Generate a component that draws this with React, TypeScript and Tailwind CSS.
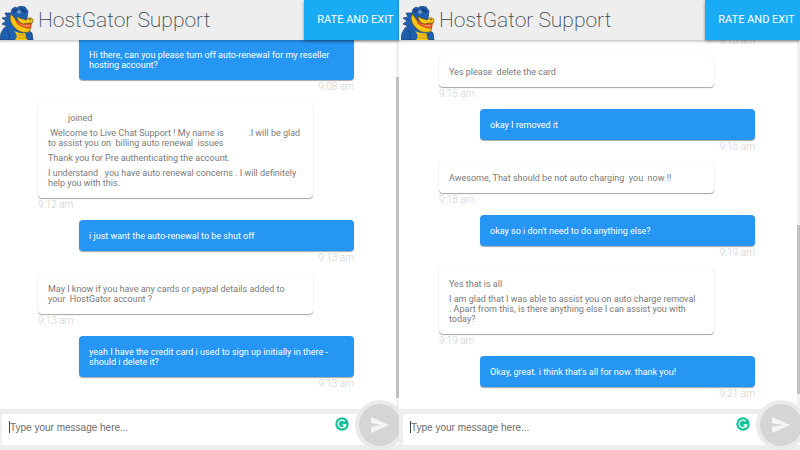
import React from 'react';

interface Message {
  from: 'agent' | 'customer';
  lines: string[];
  time: string;
}

interface ChatPanelProps {
  messages: Message[];
  listClassName: string;
  thumbTop: number;
  thumbHeight: number;
}

const firstChat: Message[] = [
  {
    from: 'customer',
    lines: [' ', ' ', 'Hi there, can you please turn off auto-renewal for my reseller\nhosting account?'],
    time: '9:08 am',
  },
  {
    from: 'agent',
    lines: [
      '         joined',
      ' Welcome to Live Chat Support ! My name is           .I will be glad\nto assist you on  billing auto renewal  issues',
      'Thank you for Pre authenticating the account.',
      'I understand   you have auto renewal concerns . I will definitely\nhelp you with this.',
    ],
    time: '9:12 am',
  },
  { from: 'customer', lines: ['i just want the auto-renewal to be shut off'], time: '9:13 am' },
  {
    from: 'agent',
    lines: ['May I know if you have any cards or paypal details added to\nyour  HostGator account ?'],
    time: '9:13 am',
  },
  {
    from: 'customer',
    lines: ['yeah I have the credit card i used to sign up initially in there -\nshould i delete it?'],
    time: '9:13 am',
  },
];

const secondChat: Message[] = [
  { from: 'customer', lines: [' '], time: '9:13 am' },
  { from: 'agent', lines: ['Yes please  delete the card'], time: '9:15 am' },
  { from: 'customer', lines: ['okay I removed it'], time: '9:16 am' },
  { from: 'agent', lines: ['Awesome, That should be not auto charging  you  now !!'], time: '9:18 am' },
  { from: 'customer', lines: ["okay so i don't need to do anything else?"], time: '9:19 am' },
  {
    from: 'agent',
    lines: [
      'Yes that is all',
      'I am glad that I was able to assist you on auto charge removal\n. Apart from this, is there anything else I can assist you with\ntoday?',
    ],
    time: '9:19 am',
  },
  { from: 'customer', lines: ["Okay, great. i think that's all for now. thank you!"], time: '9:21 am' },
];

const GatorLogo: React.FC = () => (
  <svg viewBox="0 0 34 34" className="h-[34px] w-[34px] shrink-0" aria-hidden="true">
    {/* Head, back spikes and body */}
    <path
      d="M0 34 L1 27 L4 22 L7 20 L2 18 L6 15 L2 12 L7 11 L5 7 L11 7 L12 3 L15 1 L17 2 L20 0 L25 1 L28 5 L27 12 L28 24 L32 27 L33 34 Z"
      fill="#1f5fb0"
      stroke="#1a3d73"
      strokeWidth="0.7"
      strokeLinejoin="round"
    />
    <path d="M13 4 L17 3 L16 6 L13 7 Z M20 2 L25 3 L26 7 L22 6 Z" fill="#16458a" />
    <path d="M17 5 L20 4 L21 7 L18 8 Z" fill="#7f9fbe" />
    {/* Lower jaw */}
    <path
      d="M11 8 Q13 10 16 14 Q20 19 27 22 L31 22 L29 26 Q21 28 15 22 Q8 15 11 8 Z"
      fill="#f9c613"
      stroke="#4a431e"
      strokeWidth="0.6"
    />
    {/* Mouth */}
    <path d="M14 12 Q18 17 23 17 L32 17 L31 22 Q23 23 17 18 Z" fill="#e0531f" />
    <path d="M19 18 Q24 21 29 21 L30 19 Q24 19 19 18 Z" fill="#f38a5c" />
    {/* Upper snout */}
    <path
      d="M17 10 Q20 13 23 13 L26 14 L28 12 Q33 11 33 15 Q33 18 30 17 L23 18 Q17 16 17 10 Z"
      fill="#f9c613"
      stroke="#4a431e"
      strokeWidth="0.6"
    />
    <path d="M29 13 L31 14" stroke="#4a431e" strokeWidth="0.9" />
    {/* Belly and arms */}
    <path d="M15 34 Q19 30 14 25 Q20 28 25 27 L28 34 Z" fill="#f9c613" />
    <path d="M18 29 H26 M18 32 H27" stroke="#a8851a" strokeWidth="0.7" />
    <path d="M7 24 Q11 28 9 34 M28 28 L26 31 L28 34" stroke="#1a3d73" strokeWidth="0.8" fill="none" />
  </svg>
);

const GrammarlyIcon: React.FC = () => (
  <svg viewBox="0 0 14 14" className="mt-[3px] h-[14px] w-[14px] shrink-0" aria-hidden="true">
    <circle cx="7" cy="7" r="6.7" fill="#15c39a" />
    <path d="M9.7 4.3 A3.8 3.8 0 1 0 10.6 8 H7.6" fill="none" stroke="#fff" strokeWidth="1.3" />
    <path d="M10.2 7.6 V10.2" stroke="#fff" strokeWidth="1.1" />
  </svg>
);

const ChatMessage: React.FC<{ message: Message }> = ({ message }) => {
  const mine = message.from === 'customer';

  return (
    <li className={mine ? 'flex shrink-0 flex-col items-end' : 'flex shrink-0 flex-col items-start'}>
      <div
        className={
          mine
            ? 'flex w-[87%] flex-col gap-[5px] rounded bg-[#2596f3] px-[10px] pt-[11px] pb-[10px] text-white shadow-[0_1px_1px_rgba(0,0,0,0.35)]'
            : 'flex w-[87%] flex-col gap-[5px] rounded bg-white px-[10px] pt-[11px] pb-[10px] text-[#7a7a7a] shadow-[0_1px_1px_rgba(0,0,0,0.35),0_0_1px_rgba(0,0,0,0.15)]'
        }
      >
        {message.lines.map((line, i) => (
          <p key={i} className="text-[9px] leading-[10px] whitespace-pre">{line}</p>
        ))}
      </div>
      <time className="h-[22px] pt-px text-[10px] leading-3 font-light text-[#cfcfcf]">{message.time}</time>
    </li>
  );
};

const ChatPanel: React.FC<ChatPanelProps> = ({ messages, listClassName, thumbTop, thumbHeight }) => (
  <section className="flex min-h-0 min-w-0 flex-col">
    <header className="z-10 -ml-0.5 flex h-10 shrink-0 items-stretch justify-between bg-[#eeeeee] pl-0.5 shadow-[0_1px_3px_rgba(0,0,0,0.3)]">
      <div className="flex items-center gap-1">
        <div className="self-end">
          <GatorLogo />
        </div>
        <h1 className="text-[21px] leading-6 font-extralight whitespace-nowrap text-[#37474f]">HostGator Support</h1>
      </div>
      <button className="w-[95px] bg-[#1aabf5] pl-2 text-[11px] whitespace-nowrap text-white shadow-[0_1px_3px_rgba(0,0,0,0.4)]">
        RATE AND EXIT
      </button>
    </header>

    <div className="flex min-h-0 flex-1">
      <ul className={listClassName}>
        {messages.map((message, i) => (
          <ChatMessage key={i} message={message} />
        ))}
      </ul>
      <div className="w-[3px] bg-[#f1f1f1]">
        <div style={{ height: `${thumbTop}%` }} />
        <div className="bg-[#c1c1c1]" style={{ height: `${thumbHeight}%` }} />
      </div>
    </div>

    <footer className="relative -ml-0.5 h-[41px] shrink-0 bg-[#eeeeee] py-[5px] pl-1">
      <div className="flex h-[31px] items-start bg-white pr-[50px] pl-[7px]">
        <span className="mt-[7px] h-3 w-px bg-[#444444]" />
        <input
          type="text"
          aria-label="Message"
          placeholder="Type your message here..."
          className="h-[26px] min-w-0 flex-1 font-['Liberation_Sans',sans-serif] text-[10px] text-[#333333] outline-none placeholder:text-[#6b6b6b]"
        />
        <GrammarlyIcon />
      </div>
      <div className="absolute inset-y-0 right-0 -top-[9px] w-[44px] overflow-hidden">
        <button
          aria-label="Send"
          className="flex h-[50px] w-[50px] items-center justify-center rounded-full border-4 border-[#eaeaea] bg-[#d5d5d5]"
        >
          <svg viewBox="0 0 20 18" className="h-[18px] w-5" aria-hidden="true">
            <path d="M1 1 L19 9 L1 17 V11 L12 9 L1 7 Z" fill="#f5f5f5" />
          </svg>
        </button>
      </div>
    </footer>
  </section>
);

const App: React.FC = () => (
  <main className="grid h-screen grid-cols-2 grid-rows-1 gap-0.5 overflow-hidden bg-white font-[Roboto,sans-serif]">
    <ChatPanel
      messages={firstChat}
      listClassName="flex min-w-0 flex-1 flex-col justify-end overflow-hidden pr-[42px] pb-[10px] pl-[38px]"
      thumbTop={10}
      thumbHeight={87}
    />
    <ChatPanel
      messages={secondChat}
      listClassName="flex min-w-0 flex-1 flex-col justify-end overflow-hidden pr-[42px] pl-[38px]"
      thumbTop={50}
      thumbHeight={46}
    />
  </main>
);

export default App;
